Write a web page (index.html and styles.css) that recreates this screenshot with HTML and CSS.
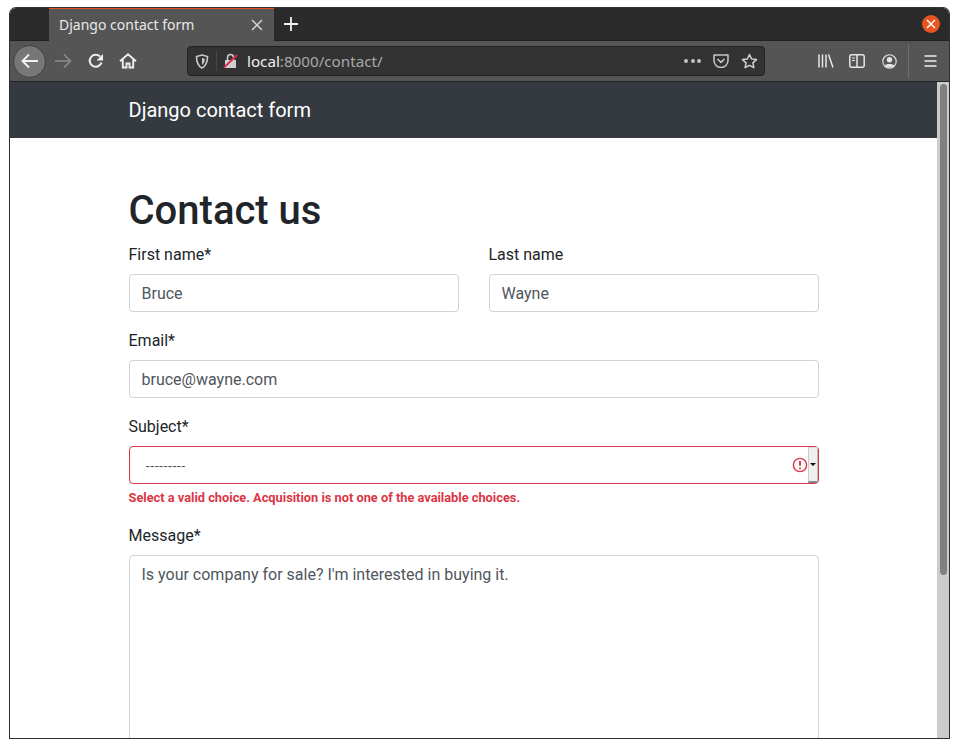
FILE: index.html
```html
<!DOCTYPE html>
<html lang="en">
<head>
<meta charset="utf-8">
<title>Django contact form</title>
<link rel="stylesheet" href="styles.css">
</head>
<body>
<div class="window">
  <div class="tabbar">
    <div class="tab">
      <span class="tab-title">Django contact form</span>
      <svg class="tab-close" width="12" height="12" viewBox="0 0 12 12"><path d="M1 1l10 10M11 1L1 11" stroke="#d4d4d4" stroke-width="1.500" fill="none"/></svg>
    </div>
    <svg class="new-tab" width="16" height="16" viewBox="0 0 16 16"><path d="M8 1v14M1 8h14" stroke="#f2f2f2" stroke-width="1.800" fill="none"/></svg>
    <div class="win-close"><svg width="10" height="10" viewBox="0 0 10 10"><path d="M1 1l8 8M9 1L1 9" stroke="#fff" stroke-width="1.500" fill="none"/></svg></div>
  </div>
  <div class="toolbar">
    <div class="back"><svg width="18" height="16" viewBox="0 0 18 16"><path d="M17 8H2M8 1.500L1.500 8 8 14.500" stroke="#f2f2f2" stroke-width="1.900" fill="none"/></svg></div>
    <svg class="forward" width="18" height="16" viewBox="0 0 18 16"><path d="M1 8h15M10 1.500L16.500 8 10 14.500" stroke="#8c8c8c" stroke-width="1.600" fill="none"/></svg>
    <svg class="reload" width="16" height="16" viewBox="0 0 16 16"><path d="M13.500 9.500A6 6 0 1 1 12 3.500" stroke="#eee" stroke-width="2.100" fill="none"/><path d="M15 1v6.500H8.500z" fill="#eee"/></svg>
    <svg class="home" width="18" height="16" viewBox="0 0 18 16"><path d="M1 8.300L9 1.300 17 8.300M3.800 6.500V14.500h3.700v-4h3v4h3.700V6.500" stroke="#eee" stroke-width="1.900" fill="none"/></svg>
    <div class="urlbar">
      <svg class="shield" width="14" height="15" viewBox="0 0 14 15"><path d="M7 1l5.500 1.500c0 5.500-1.500 9.500-5.500 11.500C3 12 1.500 8 1.500 2.500z" stroke="#c8c8c8" stroke-width="1.600" fill="none"/><path d="M7 4l2.800.8C9.800 7.500 9 9.800 7 11z" fill="#c8c8c8"/></svg>
      <span class="url-sep"></span>
      <svg class="lock" width="15" height="16" viewBox="0 0 15 16"><path d="M2 7h11v8H2z" fill="#d0d0d0"/><path d="M4.500 7V4.500a3 3 0 0 1 6 0V7" stroke="#d0d0d0" stroke-width="1.500" fill="none"/><path d="M1 14.500L14 2" stroke="#e22850" stroke-width="1.800"/></svg>
      <span class="url"><span class="url-host">local</span>:8000/contact/</span>
      <span class="dots"><i></i><i></i><i></i></span>
      <svg class="pocket" width="16" height="14" viewBox="0 0 16 14"><path d="M1 1h14v5.500a7 7 0 0 1-14 0z" stroke="#c8c8c8" stroke-width="1.500" fill="none" stroke-linejoin="round"/><path d="M4.500 5L8 8.300 11.500 5" stroke="#c8c8c8" stroke-width="1.600" fill="none"/></svg>
      <svg class="star" width="17" height="16" viewBox="0 0 17 16"><path d="M8.500 1.500l2.100 4.500 4.900.6-3.600 3.300 1 4.800-4.400-2.400-4.400 2.400 1-4.800L1.500 6.600l4.900-.6z" stroke="#d0d0d0" stroke-width="1.500" fill="none" stroke-linejoin="round"/></svg>
    </div>
    <svg class="library" width="16" height="14" viewBox="0 0 16 14"><path d="M1 0.500v13M4.500 0.500v13M8 0.500v13M10.500 0.500l4.500 13" stroke="#e6e6e6" stroke-width="1.500" fill="none"/></svg>
    <svg class="sidebar" width="16" height="14" viewBox="0 0 16 14"><rect x="0.800" y="0.800" width="14.400" height="12.400" rx="2" stroke="#e6e6e6" stroke-width="1.500" fill="none"/><path d="M8 1v12" stroke="#e6e6e6" stroke-width="1.500"/><path d="M3 4h3M3 6.500h3" stroke="#e6e6e6"/></svg>
    <svg class="account" width="15" height="15" viewBox="0 0 15 15"><circle cx="7.500" cy="7.500" r="6.700" stroke="#e6e6e6" stroke-width="1.100" fill="none"/><circle cx="7.500" cy="5.800" r="2.700" fill="#e6e6e6"/><path d="M2.800 11.500c1-2 8.400-2 9.400 0-2.500 2.500-6.900 2.500-9.400 0z" fill="#e6e6e6"/></svg>
    <span class="tool-sep"></span>
    <svg class="menu" width="13" height="12" viewBox="0 0 13 12"><path d="M0.500 1h12M0.500 6h12M0.500 11h12" stroke="#eee" stroke-width="1.600" fill="none"/></svg>
  </div>
  <div class="viewport">
    <div class="page">
      <header class="navbar"><a class="brand">Django contact form</a></header>
      <main class="container">
        <h1 class="title">Contact us</h1>
        <form class="form">
          <div class="row">
            <div class="field">
              <label class="label">First name*</label>
              <input class="control" type="text" value="Bruce">
            </div>
            <div class="field">
              <label class="label">Last name</label>
              <input class="control" type="text" value="Wayne">
            </div>
          </div>
          <div class="field">
            <label class="label">Email*</label>
            <input class="control" type="text" value="bruce@wayne.com">
          </div>
          <div class="field">
            <label class="label">Subject*</label>
            <div class="select">
              <span class="select-value">---------</span>
              <svg class="select-alert" width="18" height="18" viewBox="0 0 18 18"><circle cx="10" cy="9" r="6.600" stroke="#dc3545" stroke-width="1.400" fill="#fff"/><path d="M10 5v4.800" stroke="#dc3545" stroke-width="1.900"/><circle cx="10" cy="12.300" r="1.100" fill="#dc3545"/></svg>
              <span class="select-button"><i class="select-arrow"></i></span>
            </div>
            <div class="error">Select a valid choice. Acquisition is not one of the available choices.</div>
          </div>
          <div class="field">
            <label class="label">Message*</label>
            <div class="textarea">Is your company for sale? I'm interested in buying it.</div>
          </div>
        </form>
      </main>
    </div>
    <div class="scrollbar"><div class="thumb"></div></div>
  </div>
</div>
</body>
</html>
```
FILE: styles.css
```css
* { box-sizing: border-box; }
html, body { margin: 0; height: 100%; background: #fff; overflow: hidden; }
body { padding: 7px 9px 0; font-family: Roboto, sans-serif; }

.window {
  width: 941px;
  height: 732px;
  border: 1px solid #2e2e2e;
  border-top-color: #333;
  border-radius: 7px 7px 0 0;
  overflow: hidden;
  display: flex;
  flex-direction: column;
  background: #fff;
}

.tabbar {
  flex: none;
  height: 33px;
  background: #2b2b2b;
  display: flex;
  align-items: stretch;
  padding-left: 39px;
  border-bottom: 1px solid #202020;
}
.tab {
  width: 225px;
  margin-top: -1px;
  margin-bottom: -1px;
  background: #555;
  border-top: 2px solid #e2531e;
  display: flex;
  align-items: center;
  justify-content: space-between;
  padding: 0 11px 2px 10px;
}
.tab-title { font: 14px "Noto Sans", sans-serif; color: #e8e8e8; }
.tab-close { margin-top: 2px; }
.new-tab { align-self: center; margin-left: 9px; }
.win-close {
  margin-left: auto;
  margin-right: 9px;
  align-self: center;
  width: 18px;
  height: 18px;
  border-radius: 50%;
  background: #e95420;
  display: flex;
  align-items: center;
  justify-content: center;
}

.toolbar {
  flex: none;
  height: 41px;
  background: #555;
  border-bottom: 1px solid #222;
  display: flex;
  align-items: center;
  padding-left: 3px;
}
.back {
  width: 33px;
  height: 33px;
  border-radius: 50%;
  background: #777;
  border: 1px solid #3f3f3f;
  display: flex;
  align-items: center;
  justify-content: center;
}
.forward { margin-left: 8px; }
.reload { margin-left: 16px; }
.home { margin-left: 15px; }
.urlbar {
  margin-left: 50px;
  width: 578px;
  height: 30px;
  background: #333;
  border: 1px solid #222;
  border-radius: 4px;
  display: flex;
  align-items: center;
  padding-left: 7px;
}
.url-sep { width: 1px; height: 20px; background: #484848; margin-left: 7px; }
.lock { margin-left: 6px; }
.url { font: 15.200px "Noto Sans", sans-serif; color: #a8a8a8; margin-left: 9px; }
.url-host { color: #f0f0f0; }
.dots { margin-left: auto; display: flex; gap: 2.500px; }
.dots i { width: 4px; height: 4px; border-radius: 50%; background: #c0c0c0; }
.pocket { margin-left: 12px; }
.star { margin: 0 6px 0 12px; }
.library { margin-left: 53px; }
.sidebar { margin-left: 15px; }
.account { margin-left: 17px; }
.tool-sep { width: 1px; height: 34px; background: #6e6e6e; margin-left: 11px; }
.menu { margin-left: 15px; }

.viewport { flex: 1; min-height: 0; display: flex; }
.page { flex: 1; min-width: 0; overflow: hidden; }
.scrollbar { flex: none; width: 12px; background: #ccc; padding: 2px 2px 0 3px; }
.thumb { height: 491px; background: #808080; border-radius: 4px; }

.navbar {
  height: 56px;
  background: #343a40;
  padding-left: 118.500px;
  display: flex;
  align-items: center;
}
.brand { font-size: 20px; line-height: 30px; color: #fff; }

.container { width: 690px; margin-left: 118.500px; padding-top: 49px; }
.title { margin: 0 0 7px; font-size: 40px; line-height: 48px; font-weight: 500; color: #212529; }

.form { display: flex; flex-direction: column; gap: 16px; }
.row { display: flex; gap: 30px; }
.row .field { flex: 1; }
.label { display: block; padding-top: 1px; margin-bottom: 7px; font-size: 16px; line-height: 24px; color: #212529; }
.control {
  display: block;
  width: 100%;
  height: 38px;
  padding: 6px 12px;
  border: 1px solid #ced4da;
  border-radius: 4px;
  font: 16px/24px Roboto, sans-serif;
  color: #50565d;
  background: #fff;
}
.select {
  height: 38px;
  border: 1px solid #dc3545;
  border-radius: 4px;
  display: flex;
  align-items: center;
  padding-left: 16px;
  background: #fff;
}
.select-value { font-family: "Liberation Sans", sans-serif; font-size: 13.333px; color: #495057; }
.select-alert { margin-left: auto; }
.select-button {
  width: 10px;
  align-self: stretch;
  background: #efefef;
  border-top: 1px solid #ddd;
  border-left: 1px solid #ccc;
  border-bottom: 2px solid #888;
  border-right: 1px solid #bbb;
  display: flex;
  align-items: center;
  justify-content: center;
}
.select-arrow {
  width: 0;
  height: 0;
  border: 3px solid transparent;
  border-top: 3px solid #111;
  border-bottom: 0;
}
.error { margin-top: 4px; font-size: 12.800px; line-height: 19px; font-weight: 700; color: #dc3545; }
.textarea {
  height: 220px;
  padding: 7px 12px 6px;
  border: 1px solid #ced4da;
  border-radius: 4px;
  font-size: 16px;
  line-height: 24px;
  color: #50565d;
}
```
